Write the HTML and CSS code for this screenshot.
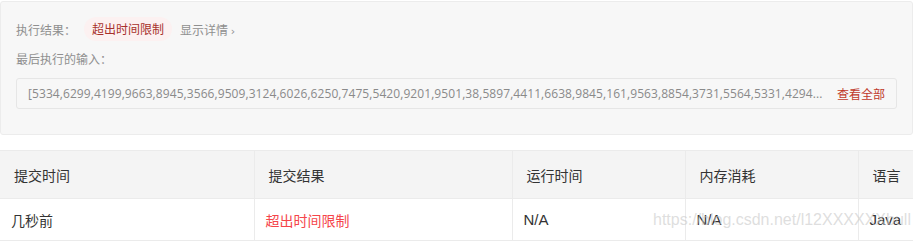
FILE: index.html
```html
<!DOCTYPE html>
<html lang="zh-CN">
<head>
<meta charset="utf-8">
<title>提交记录</title>
<link rel="stylesheet" href="styles.css">
</head>
<body>
<div class="page">
  <div class="result-panel">
    <div class="result-row">
      <span class="label">执行结果：</span>
      <span class="tag">超出时间限制</span>
      <span class="detail">显示详情 <span class="chev">›</span></span>
    </div>
    <div class="label input-label">最后执行的输入：</div>
    <div class="input-box">
      <span class="input-text">[5334,6299,4199,9663,8945,3566,9509,3124,6026,6250,7475,5420,9201,9501,38,5897,4411,6638,9845,161,9563,8854,3731,5564,5331,4294...</span>
      <span class="view-all">查看全部</span>
    </div>
  </div>

  <div class="table-wrap">
    <table class="subs">
      <colgroup>
        <col class="c1"><col class="c2"><col class="c3"><col class="c4"><col class="c5">
      </colgroup>
      <thead>
        <tr><th>提交时间</th><th>提交结果</th><th>运行时间</th><th>内存消耗</th><th>语言</th></tr>
      </thead>
      <tbody>
        <tr><td>几秒前</td><td class="tle">超出时间限制</td><td class="num">N/A</td><td class="num">N/A</td><td class="num">Java</td></tr>
      </tbody>
    </table>
    <div class="watermark">https://blog.csdn.net/l12XXXXXXbull</div>
  </div>
</div>
</body>
</html>
```

FILE: styles.css
```css
html, body {
  margin: 0;
  padding: 0;
  background: #ffffff;
}
.page {
  width: 913px;
  padding-top: 1px;
  font-family: "Noto Sans CJK SC", "Noto Sans", sans-serif;
}
.result-panel {
  background: #f7f7f7;
  border: 1px solid #ececec;
  border-radius: 3px;
  padding: 15px 15px 25px 15px;
}
.result-row {
  display: flex;
  align-items: center;
  height: 24px;
  font-size: 12px;
}
.label {
  color: #8f8f8f;
  font-size: 12px;
}
.tag {
  margin-left: 8px;
  padding: 0 8px;
  height: 24px;
  line-height: 24px;
  border-radius: 12px;
  background: #fcf1f1;
  color: #a8312c;
}
.detail {
  margin-left: 8px;
  color: #8f8f8f;
}
.chev {
  font-family: "DejaVu Sans", sans-serif;
  font-size: 11px;
}
.input-label {
  margin-top: 8px;
  line-height: 20px;
}
.input-box {
  margin-top: 9px;
  height: 29px;
  border: 1px solid #e6e6e6;
  border-radius: 3px;
  background: #f7f7f7;
  display: flex;
  align-items: center;
  justify-content: space-between;
  padding: 0 11px 0 11px;
}
.input-text {
  font-family: "Open Sans", sans-serif;
  font-size: 12px;
  letter-spacing: 0.08px;
  color: #8a8a8a;
  white-space: nowrap;
}
.view-all {
  font-size: 12px;
  color: #c0392b;
}
.table-wrap {
  position: relative;
  margin-top: 15px;
}
.subs {
  width: 913px;
  border-collapse: collapse;
  table-layout: fixed;
  font-family: "Liberation Sans", "Noto Sans CJK SC", sans-serif;
  font-size: 14px;
}
.c1 { width: 254px; }
.c2 { width: 258px; }
.c3 { width: 173px; }
.c4 { width: 173px; }
.c5 { width: 55px; }
.subs th, .subs td {
  border-top: 1px solid #ebebeb;
  border-bottom: 1px solid #ebebeb;
  border-left: 1px solid #ebebeb;
  text-align: left;
  font-weight: normal;
  white-space: nowrap;
}
.subs th:first-child, .subs td:first-child {
  border-left: none;
}
.subs th {
  background: #f4f4f4;
  color: #333333;
  height: 47px;
  padding: 0 0 0 14px;
}
.subs td {
  color: #333333;
  height: 41px;
  padding: 0 0 0 11px;
}
.subs td.tle {
  color: #f5454a;
}
.subs td.num {
  font-size: 15px;
  color: #333333;
}
.watermark {
  position: absolute;
  left: 653px;
  top: 61px;
  font-family: "Liberation Sans", sans-serif;
  font-size: 16px;
  line-height: 18px;
  color: rgba(200, 200, 200, 0.6);
  white-space: nowrap;
  pointer-events: none;
}
```
